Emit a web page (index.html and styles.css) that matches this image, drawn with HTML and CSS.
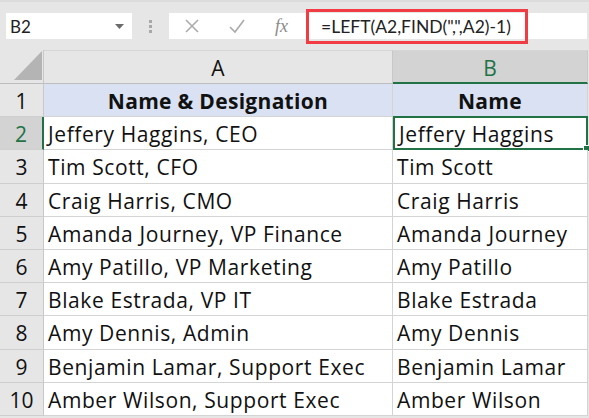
FILE: index.html
```html
<!DOCTYPE html>
<html lang="en">
<head>
    <meta charset="UTF-8">
    <title>LEFT + FIND</title>
    <link rel="stylesheet" href="styles.css">
</head>
<body>

<div class="toolbar">
    <div class="name-box">
        <span>B2</span>
        <svg class="caret" width="9" height="5" viewBox="0 0 9 5"><path d="M0 0h9L4.5 5z" fill="#6b6b6b"/></svg>
    </div>
    <div class="grip"><i></i><i></i><i></i></div>
    <div class="formula-bar">
        <svg class="fb-icon" width="16" height="16" viewBox="0 0 16 16"><path d="M2 2l12 12M14 2L2 14" stroke="#a9a9a9" stroke-width="1.5" fill="none"/></svg>
        <svg class="fb-icon" width="18" height="16" viewBox="0 0 18 16"><path d="M2 9l5 5L16 2" stroke="#a9a9a9" stroke-width="1.6" fill="none"/></svg>
        <span class="fx">fx</span>
        <span class="formula">=LEFT(A2,FIND(",",A2)-1)</span>
    </div>
</div>

<div class="sheet">
    <div class="corner">
        <svg width="28" height="29" viewBox="0 0 28 29"><path d="M28 0V29H0z" fill="#b4b4b4"/></svg>
    </div>
    <div class="col-head">A</div>
    <div class="col-head active">B</div>

    <div class="row-head">1</div>
    <div class="cell title">Name &amp; Designation</div>
    <div class="cell title">Name</div>

    <div class="row-head active">2</div>
    <div class="cell">Jeffery Haggins, CEO</div>
    <div class="cell selected">Jeffery Haggins<span class="handle"></span></div>

    <div class="row-head">3</div>
    <div class="cell">Tim Scott, CFO</div>
    <div class="cell">Tim Scott</div>

    <div class="row-head">4</div>
    <div class="cell">Craig Harris, CMO</div>
    <div class="cell">Craig Harris</div>

    <div class="row-head">5</div>
    <div class="cell">Amanda Journey, VP Finance</div>
    <div class="cell">Amanda Journey</div>

    <div class="row-head">6</div>
    <div class="cell">Amy Patillo, VP Marketing</div>
    <div class="cell">Amy Patillo</div>

    <div class="row-head">7</div>
    <div class="cell">Blake Estrada, VP IT</div>
    <div class="cell">Blake Estrada</div>

    <div class="row-head">8</div>
    <div class="cell">Amy Dennis, Admin</div>
    <div class="cell">Amy Dennis</div>

    <div class="row-head">9</div>
    <div class="cell">Benjamin Lamar, Support Exec</div>
    <div class="cell">Benjamin Lamar</div>

    <div class="row-head">10</div>
    <div class="cell">Amber Wilson, Support Exec</div>
    <div class="cell">Amber Wilson</div>
</div>

</body>
</html>
```

FILE: styles.css
```css
body {
    margin: 0;
    width: 589px;
    background: #e6e6e6;
    font-family: "Open Sans", Lato, sans-serif;
    color: #111;
}

.toolbar {
    display: flex;
    align-items: center;
    height: 50px;
    padding-left: 6px;
    border-top: 2px solid #dcdcdc;
    box-sizing: border-box;
    font-family: Lato, "Open Sans", sans-serif;
}
.name-box {
    width: 126px;
    height: 26px;
    background: #fff;
    display: flex;
    align-items: center;
    justify-content: space-between;
    padding: 0 8px 0 4px;
    box-sizing: border-box;
    font-size: 17px;
    color: #222;
}
.grip {
    width: 37px;
    display: flex;
    flex-direction: column;
    align-items: center;
    gap: 2px;
}
.grip i {
    width: 3px;
    height: 3px;
    background: #a8a8a8;
}
.formula-bar {
    flex: 1;
    height: 26px;
    background: #fff;
    display: flex;
    align-items: center;
    margin-right: 2px;
}
.fb-icon {
    margin-left: 15px;
}
.fb-icon + .fb-icon {
    margin-left: 28px;
}
.fx {
    margin-left: 29px;
    font-family: "Liberation Serif", serif;
    font-style: italic;
    font-size: 18px;
    color: #8a8a8a;
}
.formula {
    margin: -6px 0 -6px 18px;
    padding: 4px 14px 3px 12px;
    border: 3px solid #f23c44;
    font-size: 17.5px;
    color: #222;
    line-height: 22px;
}

.sheet {
    display: grid;
    grid-template-columns: 44px 349px 195px;
    grid-auto-rows: 33.2px;
    grid-template-rows: 34px;
}
.corner {
    display: flex;
    align-items: flex-end;
    justify-content: flex-end;
    padding: 0 1px 3px 0;
    border-right: 1px solid #c8c8c8;
    border-bottom: 1px solid #bdbdbd;
    box-sizing: border-box;
}
.col-head {
    display: flex;
    align-items: center;
    justify-content: center;
    padding-top: 2px;
    font-size: 21px;
    background: #e6e6e6;
    border-top: 1px solid #d6d6d6;
    border-right: 1px solid #c8c8c8;
    border-bottom: 1px solid #bdbdbd;
    box-sizing: border-box;
}
.col-head.active {
    background: #d3d3d3;
    color: #217346;
    border-bottom: 2px solid #217346;
}
.row-head {
    display: flex;
    align-items: center;
    justify-content: center;
    padding-top: 2px;
    font-size: 21px;
    background: #e6e6e6;
    border-right: 1px solid #c8c8c8;
    border-bottom: 1px solid #cfcfcf;
    box-sizing: border-box;
}
.row-head.active {
    background: #d3d3d3;
    color: #217346;
    border-right: 2px solid #217346;
}
.cell {
    position: relative;
    display: flex;
    align-items: center;
    padding: 2px 0 0 4px;
    font-size: 21px;
    letter-spacing: 0.6px;
    background: #fff;
    border-right: 1px solid #d4d4d4;
    border-bottom: 1px solid #d4d4d4;
    box-sizing: border-box;
    white-space: nowrap;
}
.cell.title {
    justify-content: center;
    padding-left: 0;
    font-weight: bold;
    letter-spacing: 0.3px;
    background: #d9e1f2;
}
.cell.selected {
    border: 2px solid #217346;
    margin-top: -1px;
    padding-left: 4px;
}
.handle {
    position: absolute;
    right: -4px;
    bottom: -4px;
    width: 5px;
    height: 5px;
    background: #217346;
    border: 1px solid #fff;
}
```
